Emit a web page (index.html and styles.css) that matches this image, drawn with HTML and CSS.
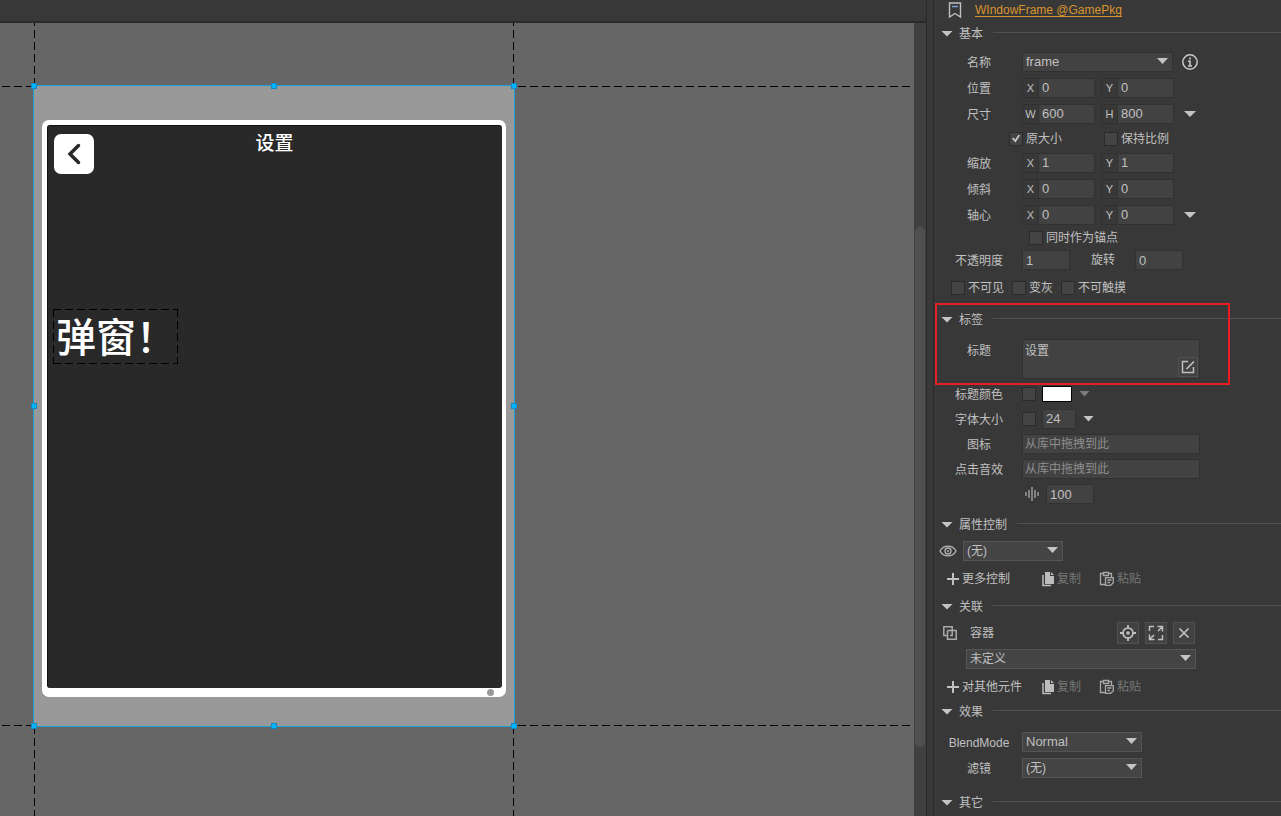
FILE: index.html
```html
<!DOCTYPE html>
<html lang="zh-CN">
<head>
<meta charset="utf-8">
<title>UI Editor</title>
<link rel="stylesheet" href="styles.css">
</head>
<body>
<svg class="defs" aria-hidden="true">
  <symbol id="copy" viewBox="0 0 14 16"><path d="M4 1h5v4h4v8H4z" fill="#bcbcbc"/><path d="M10 1l3 3h-3z" fill="#bcbcbc"/><path d="M2 4v10.500h8" fill="none" stroke="#bcbcbc" stroke-width="1.500"/></symbol>
  <symbol id="paste" viewBox="0 0 16 16"><path d="M6 13.500H1.500v-11H4M10 2.500h2.500V6M4.500 1.500h5v3h-5z" fill="none" stroke="#a8a8a8" stroke-width="1.300"/><path d="M6.500 6.700h7.800v5l-2.600 2.600H6.500zM8.500 9h4M8.500 11.500h2.500" fill="none" stroke="#a8a8a8" stroke-width="1.300"/></symbol>
  <symbol id="plus" viewBox="0 0 12 12"><path d="M6 0v12M0 6h12" stroke="#c0c0c0" stroke-width="2"/></symbol>
</svg>
<div class="app">
  <main class="editor">
    <div class="topbar"></div>
    <div class="workspace">
      <div class="canvas">
        <div class="stage">
          <div class="window">
            <button class="back" aria-label="返回"><svg width="40" height="40" viewBox="0 0 40 40"><path d="M24.500 11.500l-8.500 8.500 8.500 8.500" fill="none" stroke="#292929" stroke-width="3.500" stroke-linecap="round" stroke-linejoin="miter"/></svg></button>
            <h1 class="window-title">设置</h1>
            <p class="popup-text">弹窗！</p>
            <i class="dot"></i>
          </div>
        </div>
        <i class="guide v g-left"></i><i class="guide v g-right"></i>
        <i class="guide h g-top"></i><i class="guide h g-bottom"></i>
        <div class="selection">
          <i class="handle nw"></i><i class="handle n"></i><i class="handle ne"></i>
          <i class="handle w"></i><i class="handle e"></i>
          <i class="handle sw"></i><i class="handle s"></i><i class="handle se"></i>
        </div>
      </div>
      <div class="scrollbar"><div class="thumb"></div></div>
    </div>
  </main>
  <div class="splitter"></div>
  <aside class="inspector">
    <div class="resource">
      <svg width="14" height="16" viewBox="0 0 14 16"><path d="M1.500 1h11v14L7 11.500 1.500 15z" fill="none" stroke="#c0c0c0" stroke-width="1.400"/><path d="M4 4.500h6" stroke="#7f9fe0" stroke-width="1.400"/></svg>
      <a href="#">WIndowFrame @GamePkg</a>
    </div>

    <section class="basic">
      <h2>基本</h2>
      <div class="row">
        <label class="name" for="name">名称</label>
        <span class="drop dark wide"><select id="name"><option>frame</option></select></span>
        <button class="icon-btn info" aria-label="信息"><svg width="16" height="16" viewBox="0 0 16 16"><circle cx="8" cy="8" r="7.200" fill="none" stroke="#c8c8c8" stroke-width="1.500"/><path d="M8 3.500v2M6 7.200h2V12M6 12h4" fill="none" stroke="#c8c8c8" stroke-width="1.600"/></svg></button>
      </div>
      <div class="row">
        <span class="name">位置</span>
        <label class="axis"><span>X</span><input value="0"></label>
        <label class="axis"><span>Y</span><input value="0"></label>
      </div>
      <div class="row">
        <span class="name">尺寸</span>
        <label class="axis"><span>W</span><input value="600"></label>
        <label class="axis"><span>H</span><input value="800"></label>
        <button class="caret" aria-label="尺寸选项"></button>
      </div>
      <div class="row short size-checks">
        <label class="check"><input type="checkbox" checked>原大小</label>
        <label class="check"><input type="checkbox">保持比例</label>
      </div>
      <div class="row">
        <span class="name">缩放</span>
        <label class="axis"><span>X</span><input value="1"></label>
        <label class="axis"><span>Y</span><input value="1"></label>
      </div>
      <div class="row">
        <span class="name">倾斜</span>
        <label class="axis"><span>X</span><input value="0"></label>
        <label class="axis"><span>Y</span><input value="0"></label>
      </div>
      <div class="row">
        <span class="name">轴心</span>
        <label class="axis"><span>X</span><input value="0"></label>
        <label class="axis"><span>Y</span><input value="0"></label>
        <button class="caret" aria-label="轴心选项"></button>
      </div>
      <div class="row tiny anchor-check">
        <label class="check"><input type="checkbox">同时作为锚点</label>
      </div>
      <div class="row">
        <label class="name" for="alpha">不透明度</label>
        <input class="field small" id="alpha" value="1">
        <label class="rotation">旋转<input class="field small" value="0"></label>
      </div>
      <div class="row flags">
        <label class="check"><input type="checkbox">不可见</label>
        <label class="check"><input type="checkbox">变灰</label>
        <label class="check"><input type="checkbox">不可触摸</label>
      </div>
    </section>

    <section class="label-section">
      <h2>标签</h2>
      <div class="row title-row">
        <label class="name" for="title">标题</label>
        <div class="text-area">
          <textarea id="title">设置</textarea>
          <button class="edit" aria-label="编辑"><svg width="14" height="14" viewBox="0 0 14 14"><path d="M7 1.500H1.500v11h11V7" fill="none" stroke="#c0c0c0" stroke-width="1.500"/><path d="M5.500 9L13 1.500" stroke="#c0c0c0" stroke-width="1.700"/></svg></button>
        </div>
      </div>
    </section>

    <section class="style-section">
      <div class="row mid">
        <label class="name" for="color-on">标题颜色</label>
        <span class="check"><input type="checkbox" id="color-on"></span>
        <button class="swatch" aria-label="颜色"></button>
        <button class="caret dim" aria-label="选择颜色"></button>
      </div>
      <div class="row mid">
        <label class="name" for="size-on">字体大小</label>
        <span class="check"><input type="checkbox" id="size-on"></span>
        <input class="field size" aria-label="字体大小" value="24">
        <button class="caret" aria-label="选择大小"></button>
      </div>
      <div class="row mid">
        <label class="name" for="icon">图标</label>
        <input class="field long" id="icon" placeholder="从库中拖拽到此">
      </div>
      <div class="row mid">
        <label class="name" for="sound">点击音效</label>
        <input class="field long" id="sound" placeholder="从库中拖拽到此">
      </div>
      <div class="row volume">
        <svg width="14" height="14" viewBox="0 0 14 14"><path d="M1 5v4M4 3v8M7 0v14M10 3v8M13 5v4" stroke="#999" stroke-width="1.500"/></svg>
        <input class="field small" aria-label="音量" value="100">
      </div>
    </section>

    <section class="control-section">
      <h2>属性控制</h2>
      <div class="row eye-row">
        <svg width="18" height="12" viewBox="0 0 18 12"><path d="M1 6C4.500-.5 13.500-.5 17 6 13.500 12.500 4.500 12.500 1 6z" fill="none" stroke="#b4b4b4" stroke-width="1.400"/><circle cx="9" cy="6" r="3" fill="none" stroke="#b4b4b4" stroke-width="1.300"/><circle cx="9" cy="6" r="1" fill="#b4b4b4"/></svg>
        <span class="drop narrow"><select aria-label="控制器"><option>(无)</option></select></span>
      </div>
      <div class="row actions">
        <button class="action add"><svg width="12" height="12"><use href="#plus"/></svg>更多控制</button>
        <button class="action copy" disabled><svg width="14" height="16"><use href="#copy"/></svg>复制</button>
        <button class="action" disabled><svg width="16" height="16"><use href="#paste"/></svg>粘贴</button>
      </div>
    </section>

    <section class="relation-section">
      <h2>关联</h2>
      <div class="row container-row">
        <svg width="14" height="14" viewBox="0 0 14 14"><path d="M4.500 9.500H.8V.8h8.400v3.700M4.500 4.500h8.700v8.700H4.500V4.500M9.200 4.500v5H7" fill="none" stroke="#aaa" stroke-width="1.500"/></svg>
        <span class="target">容器</span>
        <button class="square" aria-label="定位"><svg width="16" height="16" viewBox="0 0 16 16"><circle cx="8" cy="8" r="5" fill="none" stroke="#c0c0c0" stroke-width="1.700"/><circle cx="8" cy="8" r="1.800" fill="#c0c0c0"/><path d="M8 0v4M8 12v4M0 8h4M12 8h4" stroke="#c0c0c0" stroke-width="1.800"/></svg></button>
        <button class="square" aria-label="展开"><svg width="16" height="16" viewBox="0 0 16 16"><path d="M1.500 6V1.500H6M14.500 10v4.500H10M9.500 1.500h5v5M14.500 1.500L10 6M6.500 14.500h-5v-5M1.500 14.500L6 10" fill="none" stroke="#c0c0c0" stroke-width="1.500"/></svg></button>
        <button class="square" aria-label="删除"><svg width="16" height="16" viewBox="0 0 16 16"><path d="M3.500 3.500l9 9M12.500 3.500l-9 9" stroke="#c0c0c0" stroke-width="1.700"/></svg></button>
      </div>
      <div class="row relation-row">
        <span class="drop full"><select aria-label="关联类型"><option>未定义</option></select></span>
      </div>
      <div class="row actions">
        <button class="action add"><svg width="12" height="12"><use href="#plus"/></svg>对其他元件</button>
        <button class="action copy" disabled><svg width="14" height="16"><use href="#copy"/></svg>复制</button>
        <button class="action" disabled><svg width="16" height="16"><use href="#paste"/></svg>粘贴</button>
      </div>
    </section>

    <section class="effect-section">
      <h2>效果</h2>
      <div class="row">
        <label class="name" for="blend">BlendMode</label>
        <span class="drop"><select id="blend"><option>Normal</option></select></span>
      </div>
      <div class="row">
        <label class="name" for="filter">滤镜</label>
        <span class="drop"><select id="filter"><option>(无)</option></select></span>
      </div>
    </section>

    <section><h2>其它</h2></section>
  </aside>
</div>
</body>
</html>
```
FILE: styles.css
```css
* { box-sizing: border-box; }
body {
  margin: 0;
  background: #383838;
  color: #c0c0c0;
  font: 12px/16px "Liberation Sans", "Noto Sans CJK SC", sans-serif;
}
button, input, select, textarea { font: inherit; color: inherit; margin: 0; }
button { padding: 0; border: 0; background: none; }
svg { display: block; flex: none; }
.defs { position: absolute; width: 0; height: 0; }
.app { display: flex; height: 100vh; overflow: hidden; }

/* Editor area */
.editor { flex: 1; min-width: 0; display: flex; flex-direction: column; }
.topbar { height: 23px; flex: none; border-bottom: 2px solid #2a2a2a; }
.workspace { flex: 1; min-height: 0; display: flex; }
.canvas { flex: 1; position: relative; overflow: hidden; background: #666; }
.scrollbar { width: 12px; padding: 204px 1px 0; background: #404040; }
.thumb { height: 520px; border-radius: 5px; background: #505050; }
.splitter { width: 8px; flex: none; border: solid #292929; border-width: 0 1px; }

.stage {
  position: absolute; left: 34px; top: 63px; width: 480px; height: 640px; z-index: 1;
  padding: 34px 8px 29px; background: #999;
}
.window {
  position: relative; height: 100%;
  border: 5px solid #fff; border-right-width: 4px; border-bottom-width: 9px;
  border-radius: 7px; background: #fff;
}
.window::before {
  content: ""; position: absolute; inset: 0; border: solid #111; border-width: 1px 0 0 1px;
  border-radius: 3px; background: #292929;
}
.back { position: absolute; left: 7px; top: 9px; width: 40px; height: 40px; border-radius: 7px; background: #fff; }
.window-title {
  position: relative; margin: 0; padding-top: 3px; text-align: center;
  font: 500 19px/28px "Noto Sans CJK SC", sans-serif; color: #fff;
}
.popup-text {
  position: absolute; left: 6px; top: 184px; width: 125px; height: 55px; margin: 0; padding-left: 3px;
  font: 500 40px/52px "Noto Sans CJK SC", sans-serif; color: #fff;
  background:
    repeating-linear-gradient(90deg, #000 0 8px, transparent 8px 12px) top / 100% 1px no-repeat,
    repeating-linear-gradient(90deg, #000 0 8px, transparent 8px 12px) bottom / 100% 1px no-repeat,
    repeating-linear-gradient(#000 0 8px, transparent 8px 12px) left / 1px 100% no-repeat,
    repeating-linear-gradient(#000 0 8px, transparent 8px 12px) right / 1px 100% no-repeat;
}
.dot { position: absolute; right: 8px; bottom: -8px; width: 7px; height: 7px; border-radius: 50%; background: #999; }

.guide { position: absolute; }
.guide.v { top: 7px; bottom: 0; width: 1px; background: repeating-linear-gradient(#000 0 8px, transparent 8px 12px); }
.guide.v::before { content: ""; position: absolute; top: -7px; width: 1px; height: 3px; background: #000; }
.guide.h { left: 2px; right: 4px; height: 1px; background: repeating-linear-gradient(90deg, #000 0 8px, transparent 8px 12px); }
.g-left { left: 34px; }
.g-right { left: 513px; }
.g-top { top: 63px; }
.g-bottom { top: 702px; }
.selection { position: absolute; left: 33px; top: 62px; width: 482px; height: 642px; border: 1px solid #1b9fd6; z-index: 2; }
.handle { position: absolute; width: 6px; height: 6px; background: #00b4ff; border: 1px solid #0a8ccc; transform: translate(-50%, -50%); }
.nw, .w, .sw { left: 0; }
.n, .s { left: 50%; }
.ne, .e, .se { left: 100%; }
.nw, .n, .ne { top: 0; }
.w, .e { top: 50%; }
.sw, .s, .se { top: 100%; }

/* Inspector */
.inspector { width: 347px; flex: none; overflow: hidden; }
.resource { display: flex; align-items: center; gap: 13px; height: 20px; padding-left: 14px; }
.resource a { color: #d9942f; text-underline-offset: 2px; }
h2 { display: flex; align-items: center; gap: 6px; height: 26px; margin: 0; padding: 1px 0 0 7px; font-size: 12px; font-weight: 400; }
h2::before { content: ""; width: 12px; height: 6px; background: #c4c4c4; clip-path: polygon(0 0, 100% 0, 50% 100%); }
h2::after { content: ""; flex: 1; height: 1px; margin: 0 0 2px 4px; background: #505050; }
.row { display: flex; align-items: center; height: 26px; }
.row.mid { height: 25px; }
.row.short { height: 23px; }
.row.tiny { height: 19px; }
.name { flex: none; width: 62px; margin: 0 12px 0 14px; padding-top: 2px; text-align: center; white-space: nowrap; }
.basic h2 { margin-bottom: 3px; }
.basic { padding-bottom: 5px; }

.field, .axis {
  height: 20px; border: 1px solid #313131; background: #424242;
}
.field { padding: 0 3px; outline: 0; font-size: 13px; }
.field::placeholder { color: #8e8e8e; font-size: 12px; opacity: 1; }
.small { width: 48px; }
.size { width: 34px; }
.long { width: 178px; padding: 0 2px; }
.axis { display: flex; width: 73px; }
.axis + .axis { margin-left: 6px; }
.axis span { width: 16px; font-size: 11px; line-height: 18px; text-align: center; background: #383838; border-right: 1px solid #313131; }
.axis input { flex: 1; min-width: 0; padding: 0 0 0 3px; border: 0; outline: 0; background: none; font-size: 13px; }
.caret { width: 12px; height: 6px; margin-left: 10px; background: #c4c4c4; clip-path: polygon(0 0, 100% 0, 50% 100%); }
.caret.dim { background: #7c7c7c; }
.icon-btn { margin-left: 9px; }

.drop { position: relative; width: 120px; height: 20px; }
.drop select {
  display: block; appearance: none; width: 100%; height: 20px; padding: 0 24px 0 3px;
  border: 1px solid #555; border-radius: 0; outline: 0; background: #444; font-size: 12px; line-height: 18px;
}
.drop::after {
  content: ""; position: absolute; right: 5px; top: 6px; width: 11px; height: 6px;
  background: #c4c4c4; clip-path: polygon(0 0, 100% 0, 50% 100%); pointer-events: none;
}
.drop.dark select { border-color: #313131; background: #424242; }
.drop #name, .drop #blend { font-size: 13px; }
.wide { width: 151px; }
.narrow { width: 100px; }
.full { width: 230px; }

.check { display: flex; align-items: center; gap: 3px; white-space: nowrap; }
.check input {
  appearance: none; width: 14px; height: 14px; flex: none; display: grid; place-items: center;
  border: 1px solid #2b2b2b; background: #444;
}
.check input:checked::before {
  content: ""; width: 8px; height: 8px; background: #ccc;
  clip-path: polygon(0 50%, 20% 38%, 38% 65%, 85% 0, 100% 12%, 42% 100%);
}
.size-checks { padding-left: 75px; }
.size-checks .check:first-child { width: 95px; }
.anchor-check { padding-left: 95px; }
.rotation { display: flex; align-items: center; gap: 20px; margin-left: 21px; }
.flags { padding-left: 17px; gap: 8px; margin-top: 2px; }

.label-section { position: relative; height: 75px; }
.label-section::after {
  content: ""; position: absolute; left: 1px; right: 51px; top: -3px; bottom: -4px;
  border: 2px solid #ed1c24; pointer-events: none;
}
.title-row { height: 40px; margin-top: 7px; align-items: flex-start; }
.title-row .name { margin-top: 2px; }
.text-area { position: relative; width: 178px; height: 40px; border: 1px solid #313131; background: #424242; }
.text-area textarea { display: block; width: 100%; height: 100%; padding: 3px 2px; border: 0; outline: 0; resize: none; background: none; }
.edit { position: absolute; right: 1px; bottom: 1px; width: 20px; height: 20px; display: grid; place-items: center; border: 1px solid #505050; background: #424242; }
.swatch { width: 30px; height: 16px; margin-left: 6px; border: 1px solid #000; background: #fff; }
.style-section .field.size { margin-left: 6px; }
.style-section .caret { width: 11px; margin-left: 7px; }
.volume { padding-left: 91px; gap: 7px; }
.control-section { margin-top: 4px; }
.eye-row { padding-left: 5px; gap: 6px; margin-top: 1px; }
.actions { margin-top: 2px; padding-left: 13px; }
.action { display: flex; align-items: center; gap: 3px; }
.action:disabled { gap: 2px; color: #777; }
.add { width: 94px; }
.copy { width: 58px; }
.relation-section h2 { margin: 1px 0; }
.container-row { padding-left: 9px; gap: 6px; }
.target { width: 148px; padding-left: 7px; }
.square { display: grid; place-items: center; width: 22px; height: 22px; border: 1px solid #505050; background: #414141; }
.relation-row { padding-left: 32px; }
.effect-section { height: 91px; margin-top: -2px; }
.effect-section h2 { margin-bottom: 5px; }
```
